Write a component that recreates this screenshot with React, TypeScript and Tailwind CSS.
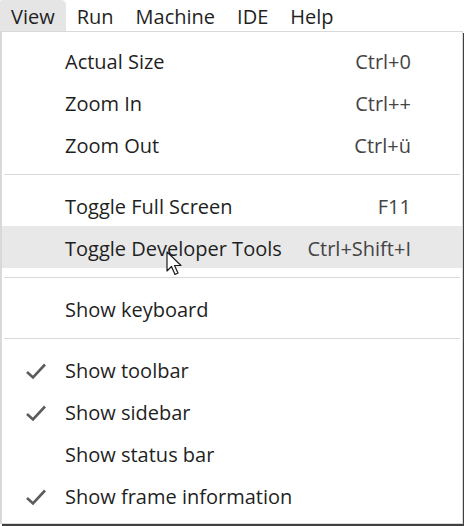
type Item = { label: string; shortcut?: string; checked?: boolean; hover?: boolean };

const groups: Item[][] = [
  [
    { label: 'Actual Size', shortcut: 'Ctrl+0' },
    { label: 'Zoom In', shortcut: 'Ctrl++' },
    { label: 'Zoom Out', shortcut: 'Ctrl+ü' },
  ],
  [
    { label: 'Toggle Full Screen', shortcut: 'F11' },
    { label: 'Toggle Developer Tools', shortcut: 'Ctrl+Shift+I', hover: true },
  ],
  [{ label: 'Show keyboard' }],
  [
    { label: 'Show toolbar', checked: true },
    { label: 'Show sidebar', checked: true },
    { label: 'Show status bar' },
    { label: 'Show frame information', checked: true },
  ],
];

const menus = ['View', 'Run', 'Machine', 'IDE', 'Help'];

function Check() {
  return (
    <svg width="22" height="18" viewBox="0 0 22 18" className="text-[#5c5c5c]">
      <path d="M2 10 L8 15.5 L20 2.5" fill="none" stroke="currentColor" strokeWidth="2.6" />
    </svg>
  );
}

function Cursor() {
  return (
    <svg width="20" height="28" viewBox="0 0 20 28" className="absolute left-[166px] top-[251px]">
      <path
        d="M1 1 L1 20 L5.5 15.5 L9 23.5 L12 22 L8.5 14.5 L15 14.5 Z"
        fill="#ffffff"
        stroke="#1a1a1a"
        strokeWidth="1.2"
        strokeLinejoin="round"
      />
    </svg>
  );
}

export default function App() {
  return (
    <div
      className="relative w-[464px] h-[526px] bg-white overflow-hidden text-[20px] text-[#1f1f1f]"
      style={{ fontFamily: '"Open Sans", "Noto Sans", sans-serif' }}
    >
      <div className="flex h-[31px]">
        {menus.map((m, i) => (
          <div
            key={m}
            className={
              i === 0
                ? 'px-[11px] pt-[2px] leading-[29px] bg-[#e5e5e5] rounded-tr-[5px] rounded-tl-[2px]'
                : 'px-[11px] pt-[2px] leading-[29px]'
            }
          >
            {m}
          </div>
        ))}
      </div>

      <div className="w-[463px] border-t border-l-2 border-r border-b border-[#d9d9d9] shadow-[2px_2px_0_#404040] py-[7px]">
        {groups.map((g, gi) => (
          <div key={gi}>
            {gi > 0 && (
              <div className="h-[19px] flex items-center px-[2px]">
                <div className="h-px w-full bg-[#d9d9d9]" />
              </div>
            )}
            {g.map((it) => (
              <div
                key={it.label}
                className={
                  it.hover
                    ? 'flex items-center h-[42px] pt-[3px] bg-[#e8e8e8] pr-[51px]'
                    : 'flex items-center h-[42px] pt-[3px] pr-[51px]'
                }
              >
                <div className="w-[63px] flex justify-center pl-[4px]">{it.checked && <Check />}</div>
                <div className="flex-1 whitespace-nowrap">{it.label}</div>
                {it.shortcut && <div className="whitespace-nowrap text-[#444]">{it.shortcut}</div>}
              </div>
            ))}
          </div>
        ))}
      </div>

      <Cursor />
    </div>
  );
}
